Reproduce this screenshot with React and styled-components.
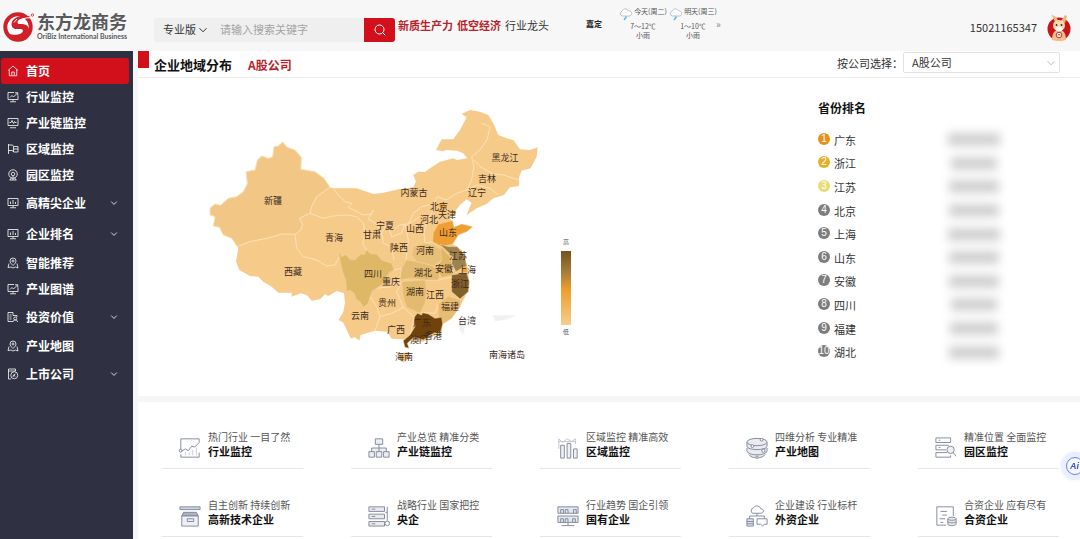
import styled, { createGlobalStyle } from "styled-components";

const GlobalStyle = createGlobalStyle`
* { box-sizing: border-box; }
body {
    margin: 0;
    background-color: #fff;
    color: #333;
    font-family: "Noto Sans CJK SC", "Noto Sans", sans-serif;
    font-size: 11px;
    line-height: 16px;
}
button, input, select { font: inherit; color: inherit; }
a { color: inherit; text-decoration: none; }
h1, h2, h3, p, ol, ul { margin: 0; padding: 0; }
ol, ul { list-style: none; }
`
const Page = styled.div`
    min-height: 100vh;
    display: flex;
    flex-direction: column;
`

/* ---------- header ---------- */
const Header = styled.header`
    height: 51px;
    display: flex;
    align-items: center;
    background-color: #f7f7f7;
`
const Brand = styled.a`
    width: 154px;
    padding-left: 3px;
    display: flex;
    align-items: center;
    gap: 3px;
`
const BrandText = styled.span`
    padding-bottom: 1px;
    display: flex;
    flex-direction: column;
    color: #58595b;
`
const BrandName = styled.strong`
    font-size: 18px;
    line-height: 22px;
    font-weight: 700;
`
const BrandLatin = styled.span`
    font-family: Lato, "Liberation Sans", sans-serif;
    font-size: 7px;
    line-height: 8px;
    font-weight: 700;
    white-space: nowrap;
`
const Search = styled.form`
    width: 241px;
    height: 24px;
    margin-top: 8px;
    display: flex;
    background-color: #f0efef;
    border-radius: 3px;
    overflow: hidden;
`
const Edition = styled.label`
    position: relative;
    display: flex;
    align-items: center;
    svg {
        position: absolute;
        right: 4px;
        pointer-events: none;
    }
`
const EditionSelect = styled.select`
    width: 58px;
    height: 24px;
    padding: 0 0 2px 9px;
    appearance: none;
    border: 0;
    background: transparent;
`
const SearchInput = styled.input`
    flex: 1;
    min-width: 0;
    padding: 0 8px 2px;
    border: 0;
    outline: 0;
    background: transparent;
    &::placeholder { color: #a3a3a3; }
`
const SearchButton = styled.button`
    width: 31px;
    padding: 0;
    border: 0;
    display: flex;
    align-items: center;
    justify-content: center;
    background-color: #d1101b;
    color: #fff;
    cursor: pointer;
`
const HotLinks = styled.nav`
    margin-left: 3px;
    padding-bottom: 2px;
    display: flex;
    gap: 4px;
    white-space: nowrap;
`
const HotLink = styled.a`
    color: ${props=>props.$hot ? "#b8222b" : "#333"};
    font-weight: ${props=>props.$hot ? 700 : 400};
`
const Weather = styled.section`
    margin-left: 37px;
    padding-bottom: 4px;
    display: flex;
    align-items: center;
    font-size: 7px;
    line-height: 9px;
    color: #555;
    white-space: nowrap;
`
const City = styled.strong`
    width: 32px;
    font-size: 8px;
    color: #222;
`
const Day = styled.div`
    width: 50px;
    display: flex;
    flex-direction: column;
    align-items: center;
`
const DayTitle = styled.span`
    display: flex;
    gap: 1px;
    height: 15px;
`
const More = styled.a`
    margin-left: -2px;
    font-size: 10px;
    color: #888;
`
const User = styled.div`
    margin-left: auto;
    padding-right: 9px;
    display: flex;
    align-items: center;
    gap: 10px;
    margin-top: 2px;
`

/* ---------- sidebar ---------- */
const Body = styled.div`
    flex: 1;
    display: flex;
`
const Sidebar = styled.nav`
    width: 133px;
    flex-shrink: 0;
    padding-top: 7px;
    background-color: #2f3142;
`
const MenuLink = styled.a`
    height: ${props=>props.$group ? "31px" : "26px"};
    margin: 0 4px 0 1px;
    padding: 0 11px 1px 6px;
    display: flex;
    align-items: center;
    gap: 7px;
    border-radius: 3px;
    background-color: ${props=>props.$active ? "#d1101b" : "transparent"};
    color: #fff;
    font-size: 12px;
    font-weight: 700;
    svg:last-child:not(:first-child) { margin-left: auto; }
`

/* ---------- content ---------- */
const Main = styled.main`
    flex: 1;
    min-width: 0;
    border-left: 5px solid #f3f7fa;
`
const TitleBar = styled.div`
    height: 27px;
    padding-right: 20px;
    display: flex;
    align-items: center;
    border-bottom: 1px solid #ebebeb;
`
const Marker = styled.span`
    align-self: flex-start;
    width: 11px;
    height: 17px;
    margin-right: 5px;
    background-color: #d1101b;
`
const Title = styled.h1`
    font-size: 13px;
    font-weight: 700;
    color: #111;
    margin-top: 2px;
`
const Scope = styled.h2`
    margin: 2px 0 0 16px;
    font-size: 12px;
    font-weight: 700;
    color: #b8222b;
`
const Filter = styled.label`
    margin-left: auto;
    padding-bottom: 3px;
    display: flex;
    align-items: center;
`
const FilterBox = styled.span`
    position: relative;
    display: flex;
    align-items: center;
    svg {
        position: absolute;
        right: 4px;
        color: #bbb;
        pointer-events: none;
    }
`
const FilterSelect = styled.select`
    width: 157px;
    height: 21px;
    padding: 0 8px 2px;
    appearance: none;
    border: 1px solid #e2e2e2;
    border-radius: 2px;
    background: #fff;
`
const Overview = styled.section`
    display: flex;
    border-bottom: 6px solid #f6f6f6;
`
const MapPane = styled.div`
    flex: 1;
    min-width: 0;
    svg {
        display: block;
        width: 100%;
        height: 318px;
    }
    text {
        font-size: 9px;
        text-anchor: middle;
        fill: #3c2a1c;
    }
    .scale { font-size: 6px; fill: #555; }
`
const Ranking = styled.section`
    width: 262px;
    padding-top: 22px;
`
const RankTitle = styled.h2`
    font-size: 12px;
    font-weight: 700;
    color: #111;
`
const RankList = styled.ol`
    height: 236px;
    margin-top: 12px;
    display: grid;
    grid-auto-rows: 1fr;
`
const RankRow = styled.li`
    display: grid;
    grid-template-columns: 12px 104px 64px;
    column-gap: 4px;
    align-items: center;
`
const RankBadge = styled.span`
    width: 12px;
    height: 12px;
    margin-bottom: 2px;
    border-radius: 50%;
    background-color: ${props=>props.$color};
    color: #fff;
    font-family: "Liberation Sans", Arial, sans-serif;
    font-size: 10px;
    line-height: 12px;
    text-align: center;
`
const Masked = styled.span`
    height: 13px;
    width: ${props=>props.$width};
    justify-self: center;
    background-color: #d0d0d0;
    filter: blur(5px);
`
const Shortcuts = styled.section`
    padding: 0 21px 0 24px;
    display: grid;
    grid-template-columns: repeat(5, 1fr);
    gap: 1px 48px;
`
const Card = styled.a`
    height: 67px;
    padding: 0 0 9px 17px;
    display: flex;
    align-items: flex-end;
    gap: 7px;
    border-bottom: 1px solid #e6e6e6;
    white-space: nowrap;
    svg { flex-shrink: 0; }
`
const CardText = styled.div`
    padding-bottom: 1px;
`
const Slogan = styled.p`
    font-size: 10px;
    line-height: 14px;
    color: #555;
`
const CardTitle = styled.h3`
    font-size: 11px;
    line-height: 14px;
    font-weight: 700;
    color: #111;
`
const Assistant = styled.button`
    position: fixed;
    right: -9px;
    top: 452px;
    width: 28px;
    height: 28px;
    padding: 5px;
    border: 0;
    border-radius: 50%;
    background-color: #e9efff;
    display: flex;
    cursor: pointer;
    box-shadow: 0 0 4px #e9efff;
`
const AssistantFace = styled.span`
    width: 18px;
    height: 18px;
    padding-left: 3px;
    border: 1px solid #6f83d8;
    border-radius: 50%;
    background-color: #f4f7ff;
    color: #3d56c4;
    font-family: "Liberation Sans", Arial, sans-serif;
    font-size: 9px;
    line-height: 16px;
    font-style: italic;
    font-weight: 700;
    text-align: left;
`

const Chevron = ({ size = 10 }) => (
    <svg width={size} height={size} viewBox="0 0 10 10" fill="none" stroke="currentColor" aria-hidden="true">
        <path d="M1.5 3.2 5 6.8 8.5 3.2" />
    </svg>
)

const Logo = () => (
    <svg width="31" height="32" viewBox="0 0 31 32" aria-hidden="true">
        <circle cx="15" cy="17" r="12.700" fill="#fff" stroke="#d0202a" strokeWidth="4" />
        <path d="M28 7C20 3 9 7 8.500 14c0 3 2 5 5 5 3 .2 6-.6 6.500 1.500.4 3-6 5.500-14 3.500 3 5 15 7 19 0 3-6-1-10-6-10-2.500 0-4.500.3-4.500-1.500C14.500 9 20 7.500 28 7z" fill="#d0202a" />
        <path d="M27.500 7.800c-5-.3-9 1-11 3.700M14 9l-3 3.500" fill="none" stroke="#fff" strokeWidth="1" />
        <circle cx="29.500" cy="5" r="1.200" fill="none" stroke="#d0202a" strokeWidth=".8" />
    </svg>
)

const RainCloud = () => (
    <svg width="14" height="14" viewBox="0 0 14 14" fill="none" aria-hidden="true">
        <path d="M3.500 9A2.500 2.500 0 0 1 3 4.200C4 1.500 8.500 1 9.500 4c3-.5 4.500 3.500 1.500 5z" stroke="#a9b3bb" strokeWidth=".8" fill="#fff" />
        <path d="M7.500 9.500 5 13" stroke="#5fb6dc" strokeWidth="1.400" />
    </svg>
)

const Avatar = () => (
    <svg width="24" height="28" viewBox="0 0 24 28" role="img" aria-label="用户头像">
        <circle cx="12" cy="16" r="11.500" fill="#c9141c" />
        <path d="M8 9 4.500 1.500 9 4l3 5zM14 8l4-6 2 1-2 7z" fill="#f0b676" />
        <ellipse cx="12" cy="12.500" rx="6" ry="5.500" fill="#f8d9ae" />
        <path d="M5 27c0-6 2-10 7-10s7 4 7 10c-4 1.500-10 1.500-14 0z" fill="#f3bd83" />
        <ellipse cx="12" cy="16" rx="3.500" ry="2.200" fill="#fff" />
        <circle cx="9.500" cy="12" r=".9" fill="#422" />
        <circle cx="14.500" cy="12" r=".9" fill="#422" />
        <circle cx="12" cy="22" r="2.800" fill="#fff" stroke="#cf3038" />
        <path d="M11 22.500c0-1.500 2-1.500 2 0" stroke="#cf3038" fill="none" />
    </svg>
)

const menuShapes = {
    home: <path d="M2 11 12 2l10 9M4.500 9v12.500h15V9M9.500 21v-7h5v7" />,
    trend: <path d="M14 3H2v14h20V9M12 17v4M6 21.500h12M6 13l4-4 3 3 8-8M16 3.500h5.500V9" />,
    wave: <path d="M2 3h20v14H2zM6 21.500h12M5 11h3l2-4 3 6 2-4 1 2h3" />,
    flag: <path d="M3 2v20M3 4h8l2 3h9v11h-9l-2-3H3M13 7v11M13 12h9" />,
    camera: <><circle cx="12" cy="10" r="8.500" /><circle cx="12" cy="10" r="3.500" /><path d="M12 13.500V22M5 22h14M9 17l-3 5M15 17l3 5" /></>,
    bars: <path d="M2 3h20v14H2zM12 17v4M6 21.500h12M7 14V9M12 14V6M17 14v-4" />,
    pin: <><path d="M12 17c-4-4-6-6-6-9a6 6 0 0 1 12 0c0 3-2 5-6 9zM4 13l-2 8 6-1 4 2 5-2 5 2-2-9" /><circle cx="12" cy="8" r="2" /></>,
    value: <><path d="M12 21H2V3h10v6M5 8h4M5 12h4M5 16h4M12 9h8v3" /><circle cx="16.500" cy="15" r="3" /><path d="M12 22c0-3 2-4 4.500-4s4.500 1 4.500 4" /></>,
    report: <><path d="M17 6V2H3v20h5M3 6h14" /><circle cx="14.500" cy="14.500" r="7" /><path d="m12 18 1-4 4-2M14 14l2 3" /></>,
}

const MenuIcon = ({ name }) => (
    <svg width="12" height="12" viewBox="0 0 24 24" fill="none" stroke="currentColor" strokeWidth="1.600" aria-hidden="true">
        {menuShapes[name]}
    </svg>
)

const cardShapes = {
    chart: <><path d="M2 14V2h20v4M2 19v3h20v-5" /><path d="M2 16l5-3 3 2 4-5 3 1 5-5" /><path d="M7 16v4M11 17v3M15 14v6M19 11v9" stroke="#c5cad6" /><circle cx="1.800" cy="15" r="1.500" fill="#fff" /></>,
    tree: <path d="M8 2h8v6H8zM12 8v4M4 16v-4h16v4M12 12v4M1 16h6v6H1zM9 16h6v6H9zM17 16h6v6h-6z" fill="#eceef3" />,
    columns: <><path d="M2 2v11M1 5h20M2 2l4 4 5-4 5 3 4-3v6" stroke="#bcc2cf" /><path d="M4 9h4v14H4zM11 7h4v16h-4zM18 13h4v10h-4z" fill="#eef0f5" /></>,
    disks: <><path d="M1 6v4c0 5 22 5 22 0V6M1 12v3c0 6 22 6 22 0v-3M3 19c3 5 15 5 18 0" fill="#e9ebf1" /><ellipse cx="12" cy="5.500" rx="11" ry="4" fill="#e9ebf1" /><circle cx="17" cy="3" r="1.500" fill="#fff" /><circle cx="7" cy="10" r="1.500" fill="#fff" /><circle cx="19" cy="15" r="1.800" fill="#fff" /><circle cx="12" cy="22" r="1.300" fill="#fff" /></>,
    serverSearch: <><path d="M1 1h16v5H1zM1 9h14M1 9v5h11M1 17v5h16v-2M1 17h12M4 3.500h2M4 11.500h2" /><circle cx="17" cy="14" r="4" fill="#eef0f5" /><path d="m20 17 3 4" /></>,
    archive: <><path d="M1 2h22v3H1z" fill="#cfd5e2" /><path d="M5 8h14l2 4H3z" fill="#aab2c4" /><path d="M3 12h18v11H3zM9 15h7v3H9z" fill="#eef0f5" /></>,
    servers: <><path d="M1 2h17v5H1zM1 10h17v5H1zM1 18h17v5H1z" fill="#e9ebf1" /><path d="M4 4.500h4M4 12.500h4M4 20.500h4M21 2v15M19 8h2" /><circle cx="21" cy="20" r="2.500" fill="#fff" /></>,
    racks: <><path d="M1 2h22v7H1zM1 12h22v7H1z" fill="#e3e7ef" /><path d="M4 9V5h3v4M9 9V5h3v4M18 9V5h3v4M4 19v-4h3v4M9 19v-4h3v4M17 19v-4h3v4M12 19v3M5 22.500h14" /></>,
    cloud: <><path d="M7 9a3.500 3.500 0 0 1 1-6c3-4 8-1 8 1 4 0 4 5 0 5zM12 9v3M4 15v-3h16v3" /><path d="M1 15h7v8H1zM1 18h7M1 20.500h7" fill="#dfe3ec" /><path d="M12 15h11v6h-3l-2 2-2-2h-4z" /></>,
    document: <><path d="M20 12V2H2v20h10M6 7h7M8 11h5M5 15h6M6 19h3" /><path d="M14 15v6c0 2 9 2 9 0v-6M14 18c0 2 9 2 9 0" fill="#e9ebf1" /><ellipse cx="18.500" cy="15" rx="4.500" ry="1.700" fill="#e9ebf1" /></>,
}

const CardIcon = ({ name }) => (
    <svg width="22" height="22" viewBox="0 0 24 24" fill="none" stroke="#7d8596" aria-hidden="true">
        {cardShapes[name]}
    </svg>
)

const menu = [
    { text: "首页", icon: "home", active: true },
    { text: "行业监控", icon: "trend" },
    { text: "产业链监控", icon: "wave" },
    { text: "区域监控", icon: "flag" },
    { text: "园区监控", icon: "camera" },
    { text: "高精尖企业", icon: "bars", group: true },
    { text: "企业排名", icon: "bars", group: true },
    { text: "智能推荐", icon: "pin" },
    { text: "产业图谱", icon: "trend" },
    { text: "投资价值", icon: "value", group: true },
    { text: "产业地图", icon: "pin" },
    { text: "上市公司", icon: "report", group: true },
]

const ranks = [
    { name: "广东", color: "#e8911c", width: "52px" },
    { name: "浙江", color: "#e3b02a", width: "46px" },
    { name: "江苏", color: "#e8dc73", width: "50px" },
    { name: "北京", color: "#7d7d7d", width: "50px" },
    { name: "上海", color: "#7d7d7d", width: "52px" },
    { name: "山东", color: "#7d7d7d", width: "50px" },
    { name: "安徽", color: "#7d7d7d", width: "50px" },
    { name: "四川", color: "#7d7d7d", width: "46px" },
    { name: "福建", color: "#7d7d7d", width: "48px" },
    { name: "湖北", color: "#7d7d7d", width: "50px" },
]

const shortcuts = [
    { slogan: "热门行业 一目了然", title: "行业监控", icon: "chart" },
    { slogan: "产业总览 精准分类", title: "产业链监控", icon: "tree" },
    { slogan: "区域监控 精准高效", title: "区域监控", icon: "columns" },
    { slogan: "四维分析 专业精准", title: "产业地图", icon: "disks" },
    { slogan: "精准位置 全面监控", title: "园区监控", icon: "serverSearch" },
    { slogan: "自主创新 持续创新", title: "高新技术企业", icon: "archive" },
    { slogan: "战略行业 国家把控", title: "央企", icon: "servers" },
    { slogan: "行业趋势 国企引领", title: "国有企业", icon: "racks" },
    { slogan: "企业建设 行业标杆", title: "外资企业", icon: "cloud" },
    { slogan: "合资企业 应有尽有", title: "合资企业", icon: "document" },
]

// province shapes, three units to one label unit
const mainland = "30,325 45,312 62,316 85,295 110,290 130,275 142,252 138,215 165,210 172,180 185,168 205,175 218,170 222,140 235,138 248,126 262,142 285,150 304,172 303,208 345,215 372,235 390,262 400,265 470,265 520,282 550,278 595,268 640,262 648,245 640,225 655,215 675,216 690,205 720,185 760,175 772,180 802,175 790,160 772,152 740,150 730,154 708,150 725,118 760,118 780,90 800,52 785,42 810,30 840,35 865,45 880,70 895,105 920,115 940,120 960,148 990,150 1013,142 1010,170 992,205 965,212 957,232 957,258 930,262 912,285 880,295 860,312 830,325 800,345 808,325 815,308 800,298 780,315 768,330 768,345 750,352 758,380 785,380 818,380 800,395 775,405 758,432 785,450 800,490 805,520 808,560 795,590 780,620 755,655 728,672 725,700 690,712 670,725 640,722 622,725 610,718 575,716 562,695 525,692 510,697 482,705 478,722 465,712 452,715 440,690 430,668 416,660 430,635 435,608 432,580 410,573 385,588 375,583 360,598 335,602 320,585 302,580 275,590 275,578 235,578 215,560 190,545 175,530 150,528 118,510 108,485 115,445 95,415 70,405 58,382 40,378 45,350 30,345"
const xinjiang = "30,325 45,312 62,316 85,295 110,290 130,275 142,252 138,215 165,210 172,180 185,168 205,175 218,170 222,140 235,138 248,126 262,142 285,150 304,172 303,208 345,215 372,235 390,262 350,290 335,320 330,340 298,355 308,373 302,390 285,403 245,402 200,415 150,425 112,440 95,415 70,405 58,382 40,378 45,350 30,345"
const provinces = [
    { id: "四川", color: "#deb866", points: "415,452 425,470 437,464 450,478 465,480 482,462 492,464 500,450 512,462 530,462 545,480 575,490 582,510 568,518 560,530 548,552 530,565 518,572 510,590 505,610 490,622 480,604 470,600 462,580 450,570 440,575 437,540 428,515 422,490" },
    { id: "河南", color: "#e6bf78", points: "640,440 675,430 700,435 725,450 725,480 700,498 650,485 635,465" },
    { id: "湖北", color: "#e2ba70", points: "605,505 620,480 650,485 700,498 720,520 715,540 675,540 630,535 600,540" },
    { id: "湖南", color: "#e2ba70", points: "605,545 675,540 680,570 675,610 660,640 620,622 610,590" },
    { id: "安徽", color: "#e0b566", points: "722,440 750,470 756,490 758,525 725,532 710,505 725,480" },
    { id: "福建", color: "#e6bd73", points: "715,612 745,588 782,600 780,620 755,655 728,672 715,650" },
    { id: "山东", color: "#ee9f33", points: "700,398 715,372 758,362 762,382 785,372 818,380 800,395 775,405 758,432 725,440 698,425" },
    { id: "江苏", color: "#9d8350", points: "720,433 745,440 772,440 795,470 800,500 785,505 768,515 755,490 758,470" },
    { id: "上海", color: "#eba53f", points: "785,502 800,500 803,516 788,518" },
    { id: "浙江", color: "#80602b", points: "755,525 800,518 808,545 805,575 780,597 755,575" },
    { id: "北京", color: "#e8a040", points: "715,310 735,308 740,326 722,332" },
    { id: "广东", color: "#70430d", points: "643,652 652,640 665,645 668,638 685,642 705,655 725,652 728,672 722,695 705,698 690,705 670,720 642,710 622,730 627,745 615,742 610,722 630,705 645,680" },
    { id: "海南", color: "#f1c583", points: "598,762 625,757 628,775 610,787 597,777" },
]
const borders = [
    "330,340 370,355 400,348 440,345 470,350 490,370 495,400 488,430 500,452",
    "285,403 290,445 310,470 350,480 380,498 405,495 418,470",
    "400,265 415,285 435,305 455,310 445,322 490,345 515,342 520,330 505,358 530,372 545,400 550,430 575,440 582,480",
    "545,400 562,370 580,390 600,375 625,372 640,340 665,320 700,312 712,290 740,300 770,280 800,270 815,240 822,200 815,170 840,150 862,118 870,80 845,70",
    "822,180 840,200 880,222 910,225 957,240",
    "800,270 830,255 870,265 895,285",
    "562,370 575,410 605,400 615,370 625,420 618,480",
    "625,372 660,350 680,365 672,400 675,430",
    "680,365 700,330 715,310 740,326 750,352",
    "675,430 698,425 725,440",
    "582,510 605,505 600,540 570,560 530,565",
    "605,545 590,575 610,622 575,640 540,650 530,620 510,590",
    "540,650 525,692",
    "610,622 643,652 630,705",
    "675,540 715,540 760,530 755,575 782,600",
    "715,612 705,640 665,638",
]
const labels = [
    ["新疆", 273, 201], ["西藏", 293, 272], ["青海", 334, 238], ["甘肃", 372, 235], ["宁夏", 385, 226],
    ["内蒙古", 414, 193], ["黑龙江", 505, 158], ["吉林", 487, 179], ["辽宁", 477, 193], ["北京", 439, 207],
    ["天津", 447, 215], ["河北", 429, 220], ["山西", 415, 229], ["山东", 448, 233], ["陕西", 399, 248],
    ["河南", 425, 251], ["江苏", 458, 256], ["安徽", 444, 269], ["上海", 467, 270], ["湖北", 423, 273],
    ["四川", 373, 274], ["重庆", 391, 282], ["浙江", 460, 284], ["湖南", 415, 292], ["江西", 435, 295],
    ["贵州", 387, 303], ["福建", 450, 307], ["云南", 360, 316], ["台湾", 467, 321], ["广东", 422, 323],
    ["广西", 396, 330], ["香港", 433, 336], ["澳门", 419, 340], ["海南", 404, 357], ["南海诸岛", 507, 355],
]

const ChinaMap = () => (
    <svg viewBox="138 78 680 318" preserveAspectRatio="xMinYMin meet" role="img" aria-label="企业地域分布">
        <defs>
            <linearGradient id="heat" x1="0" y1="0" x2="0" y2="1">
                <stop offset="0" stopColor="#75521c" />
                <stop offset=".3" stopColor="#a9803a" />
                <stop offset=".52" stopColor="#ee9d2c" />
                <stop offset="1" stopColor="#f3cf8e" />
            </linearGradient>
        </defs>
        <g transform="translate(200 100) scale(.3333)" strokeLinejoin="round">
            <polygon points={mainland} fill="#f6ca89" />
            <polygon points={xinjiang} fill="#f2c785" stroke="#fbe2b9" strokeWidth="3" />
            {borders.map((line) => (
                <polyline key={line} points={line} fill="none" stroke="#fbe2b9" strokeWidth="3" />
            ))}
            {provinces.map((item) => (
                <polygon key={item.id} points={item.points} fill={item.color} stroke="#f6d49b" strokeWidth="1.500" />
            ))}
            <path d="M785 662l10 18-6 26-12-20zM878 646h72l-18 8-20 6-26 4zM960 650l3 50" fill="#f1f1f3" />
        </g>
        {labels.map(([name, x, y]) => (
            <text key={name} x={x} y={y + 3}>{name}</text>
        ))}
        <text className="scale" x="566" y="244">高</text>
        <rect x="561" y="251" width="10" height="74" fill="url(#heat)" />
        <text className="scale" x="566" y="334">低</text>
    </svg>
)

const TopBar = () => (
    <Header>
        <Brand href="#home">
            <Logo />
            <BrandText>
                <BrandName>东方龙商务</BrandName>
                <BrandLatin>OriBiz International Business</BrandLatin>
            </BrandText>
        </Brand>
        <Search onSubmit={(e) => e.preventDefault()}>
            <Edition>
                <EditionSelect aria-label="版本">
                    <option>专业版</option>
                </EditionSelect>
                <Chevron />
            </Edition>
            <SearchInput type="text" aria-label="搜索" placeholder="请输入搜索关键字" />
            <SearchButton type="submit" aria-label="搜索">
                <svg width="12" height="12" viewBox="0 0 12 12" fill="none" stroke="currentColor">
                    <circle cx="5.500" cy="5.500" r="4.500" />
                    <path d="m8.800 8.800 2.500 2.500" />
                </svg>
            </SearchButton>
        </Search>
        <HotLinks>
            <HotLink href="#quality" $hot>新质生产力</HotLink>
            <HotLink href="#low-altitude" $hot>低空经济</HotLink>
            <HotLink href="#leaders">行业龙头</HotLink>
        </HotLinks>
        <Weather>
            <City>嘉定</City>
            <Day>
                <DayTitle><RainCloud />今天(周二)</DayTitle>
                <span>7～12℃</span>
                <span>小雨</span>
            </Day>
            <Day>
                <DayTitle><RainCloud />明天(周三)</DayTitle>
                <span>1～10℃</span>
                <span>小雨</span>
            </Day>
            <More href="#weather">»</More>
        </Weather>
        <User>
            <span>15021165347</span>
            <Avatar />
        </User>
    </Header>
)

export default function App() {
    return (
        <Page>
            <GlobalStyle />
            <TopBar />
            <Body>
                <Sidebar>
                    {menu.map((item) => (
                        <MenuLink key={item.text} href="#menu" $active={item.active} $group={item.group}>
                            <MenuIcon name={item.icon} />
                            {item.text}
                            {item.group && <Chevron size={8} />}
                        </MenuLink>
                    ))}
                </Sidebar>
                <Main>
                    <TitleBar>
                        <Marker />
                        <Title>企业地域分布</Title>
                        <Scope>A股公司</Scope>
                        <Filter>
                            按公司选择：
                            <FilterBox>
                                <FilterSelect>
                                    <option>A股公司</option>
                                </FilterSelect>
                                <Chevron />
                            </FilterBox>
                        </Filter>
                    </TitleBar>
                    <Overview>
                        <MapPane>
                            <ChinaMap />
                        </MapPane>
                        <Ranking>
                            <RankTitle>省份排名</RankTitle>
                            <RankList>
                                {ranks.map((item, i) => (
                                    <RankRow key={item.name}>
                                        <RankBadge $color={item.color}>{i + 1}</RankBadge>
                                        <span>{item.name}</span>
                                        <Masked $width={item.width} />
                                    </RankRow>
                                ))}
                            </RankList>
                        </Ranking>
                    </Overview>
                    <Shortcuts>
                        {shortcuts.map((item) => (
                            <Card key={item.title} href="#shortcut">
                                <CardIcon name={item.icon} />
                                <CardText>
                                    <Slogan>{item.slogan}</Slogan>
                                    <CardTitle>{item.title}</CardTitle>
                                </CardText>
                            </Card>
                        ))}
                    </Shortcuts>
                </Main>
            </Body>
            <Assistant type="button" aria-label="AI 助手">
                <AssistantFace>Ai</AssistantFace>
            </Assistant>
        </Page>
    )
}
